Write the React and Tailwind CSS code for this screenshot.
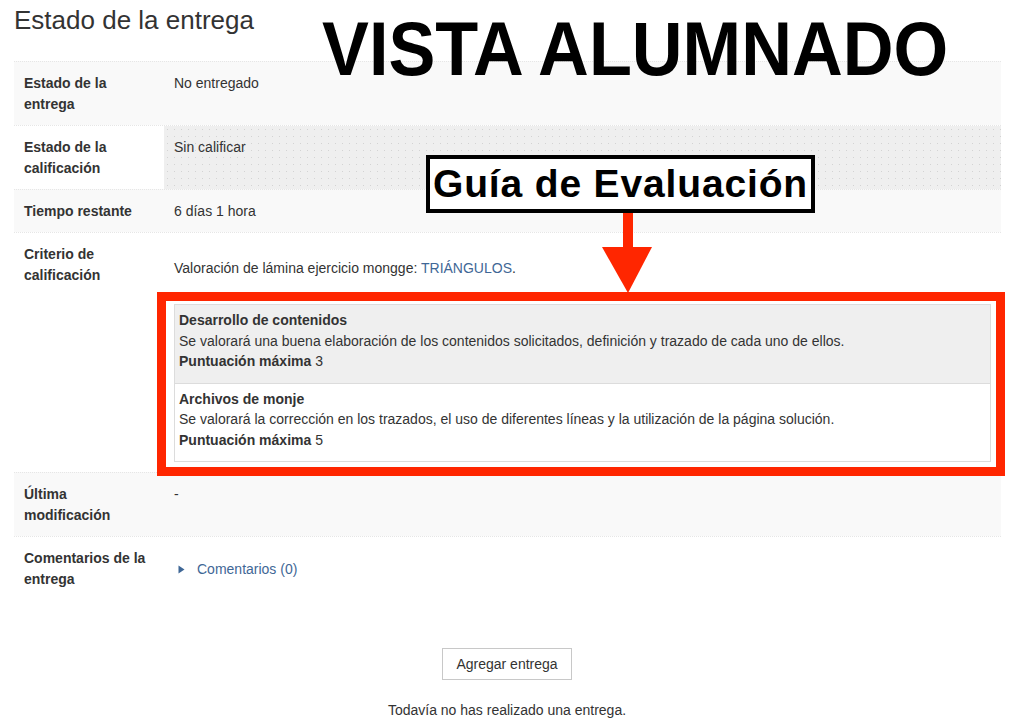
import React from "react";

const rows = [
    { label: ["Estado de la", "entrega"], value: "No entregado", bg: "bg-[#f9f9f9]" },
    { label: ["Estado de la", "calificación"], value: "Sin calificar", dotted: true },
    { label: ["Tiempo restante"], value: "6 días 1 hora", bg: "bg-[#f9f9f9]" },
];

const criteria = [
    {
        title: "Desarrollo de contenidos",
        text: "Se valorará una buena elaboración de los contenidos solicitados, definición y trazado de cada uno de ellos.",
        points: 3,
        bg: "bg-[#efefef] border-b border-[#dcdcdc]",
    },
    {
        title: "Archivos de monje",
        text: "Se valorará la corrección en los trazados, el uso de diferentes líneas y la utilización de la página solución.",
        points: 5,
        bg: "bg-white",
    },
];

const Label = ({ lines }) => (
    <div className="px-[10px] pt-[11px] pb-[10px] font-bold leading-[21px]">
        {lines.map((l, i) => (
            <div key={i}>{l}</div>
        ))}
    </div>
);

const App = () => {
    return (
        <div className="relative w-[1014px] min-h-[727px] bg-white text-[#333] text-[14px] font-['Liberation_Sans',Arial,sans-serif]">
            <div className="px-[14px] pt-[5px]">
                <h3 className="text-[26px] leading-[30px] font-normal mb-[26px]">
                    Estado de la entrega
                </h3>

                {/* status table */}
                <div className="w-[987px]">
                    {rows.map((r, i) => (
                        <div
                            key={i}
                            className={`grid grid-cols-[150px_1fr] border-t border-dotted border-[#e6e6e6] ${r.bg || "bg-white"}`}
                        >
                            <Label lines={r.label} />
                            <div
                                className={`px-[10px] pt-[11px] pb-[10px] leading-[21px] ${
                                    r.dotted
                                        ? "bg-[#efefef] bg-[radial-gradient(circle,#d3d3d3_0.6px,transparent_1px)] bg-[length:7px_7px]"
                                        : ""
                                }`}
                            >
                                {r.value}
                            </div>
                        </div>
                    ))}

                    {/* Criterio de calificación */}
                    <div className="grid grid-cols-[150px_1fr] border-t border-dotted border-[#e6e6e6] bg-white">
                        <Label lines={["Criterio de", "calificación"]} />
                        <div className="px-[10px] pt-[11px] pb-[10px]">
                            <div className="mt-[14px] leading-[20px]">
                                Valoración de lámina ejercicio mongge:{" "}
                                <span className="text-[#3f6796]">TRIÁNGULOS</span>.
                            </div>
                            <div className="relative mt-[26px]">
                                <div className="border border-[#dcdcdc]">
                                    {criteria.map((c, i) => (
                                        <div
                                            key={i}
                                            className={`px-[4px] pt-[5px] pb-[11px] leading-[20.5px] ${c.bg}`}
                                        >
                                            <div className="font-bold">{c.title}</div>
                                            <div>{c.text}</div>
                                            <div>
                                                <span className="font-bold">Puntuación máxima</span>{" "}
                                                {c.points}
                                            </div>
                                        </div>
                                    ))}
                                </div>
                                {/* red annotation frame */}
                                <div className="pointer-events-none absolute -left-[17px] -top-[12px] -right-[14px] -bottom-[14px] border-[9px] border-[#ff2600]"></div>
                            </div>
                        </div>
                    </div>

                    {/* Última modificación */}
                    <div className="grid grid-cols-[150px_1fr] border-t border-dotted border-[#e6e6e6] bg-[#f9f9f9]">
                        <Label lines={["Última", "modificación"]} />
                        <div className="px-[10px] pt-[11px] pb-[10px] leading-[21px]">-</div>
                    </div>

                    {/* Comentarios */}
                    <div className="grid grid-cols-[150px_1fr] border-t border-dotted border-[#e6e6e6] bg-white">
                        <Label lines={["Comentarios de la", "entrega"]} />
                        <div className="flex items-center px-[14px] pt-[11px] pb-[10px] leading-[21px] text-[#3f6796]">
                            <svg width="7" height="9" viewBox="0 0 7 9" className="mr-[12px]">
                                <path d="M0.5 0.5 L6.5 4.5 L0.5 8.5 Z" fill="#3f6796" />
                            </svg>
                            Comentarios (0)
                        </div>
                    </div>
                </div>
            </div>

            {/* actions */}
            <div className="flex flex-col items-center mt-[48px]">
                <button className="h-[32px] px-[13.5px] border border-[#c8c8c8] bg-white text-[14px] text-[#333]">
                    Agregar entrega
                </button>
                <p className="mt-[20px] leading-[20px]">Todavía no has realizado una entrega.</p>
            </div>

            {/* annotations */}
            <div className="pointer-events-none absolute left-[322px] top-[11px] text-[76px] leading-[76px] font-bold text-black whitespace-nowrap origin-left scale-x-[0.925]">
                VISTA ALUMNADO
            </div>
            <div className="pointer-events-none absolute left-[426px] top-[155px] w-[389px] h-[58px] border-[4px] border-black bg-white flex items-center justify-center">
                <span className="text-[39px] leading-[40px] font-bold text-black tracking-[0.85px]">
                    Guía de Evaluación
                </span>
            </div>
            <svg
                className="pointer-events-none absolute left-[602px] top-[213px]"
                width="50"
                height="80"
                viewBox="0 0 50 80"
            >
                <rect x="21" y="0" width="10" height="35" fill="#ff2600" />
                <path d="M0 34 L50 34 L26 80 Z" fill="#ff2600" />
            </svg>
        </div>
    );
};

export default App;
